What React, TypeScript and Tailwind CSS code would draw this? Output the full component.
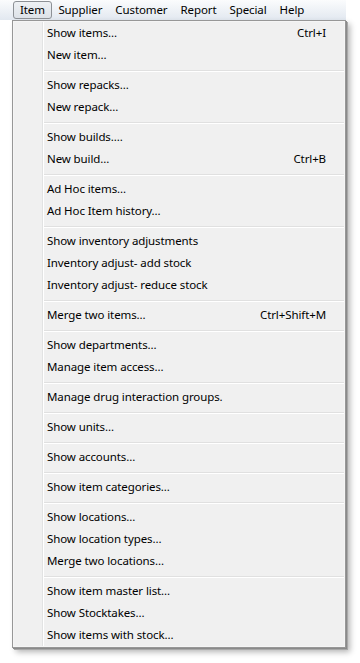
const groups: { label: string; shortcut?: string }[][] = [
  [{ label: "Show items...", shortcut: "Ctrl+I" }, { label: "New item..." }],
  [{ label: "Show repacks..." }, { label: "New repack..." }],
  [{ label: "Show builds...." }, { label: "New build...", shortcut: "Ctrl+B" }],
  [{ label: "Ad Hoc items..." }, { label: "Ad Hoc Item history..." }],
  [
    { label: "Show inventory adjustments" },
    { label: "Inventory adjust- add stock" },
    { label: "Inventory adjust- reduce stock" },
  ],
  [{ label: "Merge two items...", shortcut: "Ctrl+Shift+M" }],
  [{ label: "Show departments..." }, { label: "Manage item access..." }],
  [{ label: "Manage drug interaction groups." }],
  [{ label: "Show units..." }],
  [{ label: "Show accounts..." }],
  [{ label: "Show item categories..." }],
  [
    { label: "Show locations..." },
    { label: "Show location types..." },
    { label: "Merge two locations..." },
  ],
  [
    { label: "Show item master list..." },
    { label: "Show Stocktakes..." },
    { label: "Show items with stock..." },
  ],
];

const menus = ["Supplier", "Customer", "Report", "Special", "Help"];

export default function App() {
  return (
    <div className="relative h-[663px] w-[360px] overflow-hidden bg-white font-['Noto_Sans',sans-serif] text-[11.5px] tracking-[-0.1px] text-black">
      {/* menu bar */}
      <div className="flex h-[20px] w-[346px] items-center bg-gradient-to-b from-[#fbfcfd] to-[#e2e8f0] pl-[13px]">
        <div className="flex h-[18px] items-center rounded-[3px] border border-[#8d9196] bg-gradient-to-b from-[#eef1f4] to-[#dde2e8] px-[6px] leading-none">
          Item
        </div>
        {menus.map((m) => (
          <div key={m} className="px-[6.5px] leading-none">
            {m}
          </div>
        ))}
      </div>

      {/* dropdown */}
      <div className="ml-[12px] w-[334px] border border-[#979797] bg-[#f0f0f0] shadow-[1px_1px_0_#8a8a8a,2px_2px_0_#a8a8a8,4px_4px_6px_rgba(0,0,0,0.3)]">
        <div className="border border-[#f5f5f5]">
          <div className="ml-[28px] border-l border-[#e2e3e3]">
            <div className="border-l border-white">
              {groups.map((g, gi) => (
                <div key={gi}>
                  {gi > 0 && (
                    <div className="flex h-[8px] flex-col pt-[4px]">
                      <div className="h-px bg-[#e0e0e0]" />
                      <div className="h-px bg-white" />
                    </div>
                  )}
                  {g.map((it) => (
                    <div
                      key={it.label}
                      className="flex h-[22px] items-center justify-between pl-[3px] pr-[18px] leading-none"
                    >
                      <span>{it.label}</span>
                      {it.shortcut && <span>{it.shortcut}</span>}
                    </div>
                  ))}
                </div>
              ))}
            </div>
          </div>
        </div>
      </div>
    </div>
  );
}
